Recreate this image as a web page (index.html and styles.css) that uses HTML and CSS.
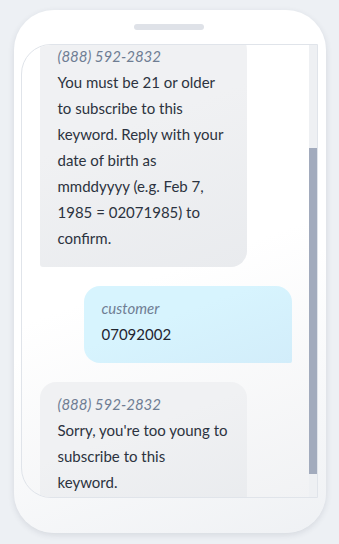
FILE: index.html
```html
<!DOCTYPE html>
<html lang="en">
<head>
  <meta charset="UTF-8" />
  <meta name="viewport" content="width=device-width, initial-scale=1.0" />
  <title>Keyword Age Check</title>
  <link rel="stylesheet" href="styles.css">
</head>
<body>
  <div class="phone">
    <div class="notch"></div>

    <div class="screen">
      <div class="messages">
        <div class="bubble incoming">
          <div class="sender">(888) 592-2832</div>
          <div class="text">You must be 21 or older to subscribe to this keyword. Reply with your date of birth as mmddyyyy (e.g. Feb 7, 1985 = 02071985) to confirm.</div>
        </div>

        <div class="bubble outgoing">
          <div class="sender">customer</div>
          <div class="text">07092002</div>
        </div>

        <div class="bubble incoming">
          <div class="sender">(888) 592-2832</div>
          <div class="text">Sorry, you're too young to subscribe to this keyword.</div>
        </div>
      </div>

      <div class="scroll-track">
        <div class="scroll-thumb"></div>
      </div>
    </div>
  </div>
</body>
</html>
```

FILE: styles.css
```css
body {
  margin: 0;
  padding: 10px 0 11px;
  background: #edf0f4;
  font-family: Lato, "Open Sans", sans-serif;
}

.phone {
  width: 312px;
  height: 523px;
  margin: 0 auto;
  padding: 14px 8px 35px 7px;
  box-sizing: border-box;
  border-radius: 40px;
  background: linear-gradient(160deg, #ffffff 55%, #eff1f4 100%);
  box-shadow: 0 2px 6px rgba(40, 50, 70, 0.12);
  display: flex;
  flex-direction: column;
}

.notch {
  width: 70px;
  height: 6px;
  margin: 0 auto 14px;
  border-radius: 3px;
  background: #dfe2e8;
}

.screen {
  flex: 1;
  display: flex;
  overflow: hidden;
  border: 1px solid #e0e4ea;
  border-radius: 30px 0 0 30px;
  background: linear-gradient(160deg, #ffffff 50%, #f1f2f4 100%);
}

.messages {
  flex: 1;
  display: flex;
  flex-direction: column;
  gap: 19px;
  margin-top: -11px;
  padding: 0 17px 0 18px;
  overflow: hidden;
}

.bubble {
  width: 207px;
  padding: 9px 18px 16px;
  box-sizing: border-box;
  font-size: 15px;
  line-height: 26px;
  flex-shrink: 0;
}

.incoming {
  align-self: flex-start;
  border-radius: 16px 16px 16px 3px;
  background: linear-gradient(160deg, #f0f1f3 40%, #e9ebee 100%);
  color: #2c3340;
}

.outgoing {
  align-self: flex-end;
  width: 208px;
  border-radius: 16px 16px 2px 16px;
  background: linear-gradient(160deg, #d7f4fe 40%, #d2edfa 100%);
  color: #1f2530;
}

.sender {
  font-style: italic;
  color: #6f7d93;
}

.scroll-track {
  width: 8px;
  flex-shrink: 0;
  padding-top: 103px;
  background: #eef0f3;
}

.scroll-thumb {
  height: 326px;
  background: #a2abbd;
}
```
